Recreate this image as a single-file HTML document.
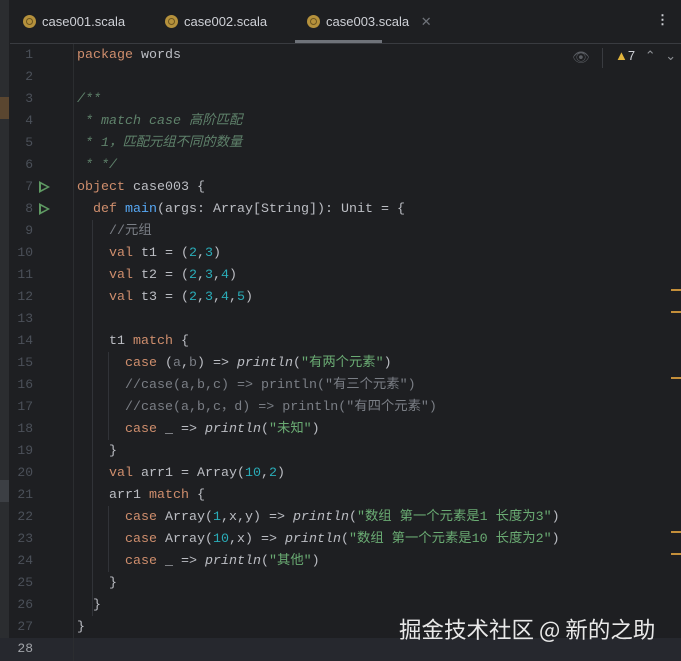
<html><head><style>
body{margin:0;width:681px;height:661px;background:#1e1f22;overflow:hidden;position:relative;font-family:"Liberation Mono","Noto Sans CJK SC",monospace;}
.tabs{position:absolute;left:10px;top:0;right:0;height:43px;border-bottom:1px solid #393b40;font-family:"Liberation Sans",sans-serif;font-size:13px;color:#ced0d6;}
.tab{position:absolute;top:14px;}
.ic{display:inline-block;width:13px;height:13px;border-radius:50%;background:#b5913c;vertical-align:-2px;margin-right:6px;position:relative}
.ic:after{content:"";position:absolute;left:3px;top:3px;width:5px;height:5px;border-radius:50%;border:1px solid #6b5420}
.strip{position:absolute;left:0;top:0;width:9px;height:661px;background:#2b2d30}
.ln{position:absolute;left:10px;width:23px;text-align:right;color:#4b5059;font-size:13px}
.code{position:absolute;left:77px;font-size:13.33px;color:#bcbec4;white-space:pre;line-height:22px}
.k{color:#cf8e6d}.n{color:#2aacb8}.s{color:#6aab73}.c{color:#7a7e85}.d{color:#5f826b;font-style:italic}.i{font-style:italic}.f{color:#56a8f5}
.run{position:absolute;left:39px;width:0;height:0;border-left:11px solid #5f9a63;border-top:6px solid transparent;border-bottom:6px solid transparent}
.run:after{content:"";position:absolute;left:-9px;top:-3px;border-left:6px solid #1e1f22;border-top:3px solid transparent;border-bottom:3px solid transparent}
.mk{position:absolute;left:671px;width:10px;height:2px;background:#c48f3a}
.vl{position:absolute;width:1px;background:#313338}
</style></head><body>
<div class="strip"></div>
<div style="position:absolute;left:0;top:97px;width:9px;height:22px;background:#5a4630"></div>
<div style="position:absolute;left:0;top:480px;width:9px;height:22px;background:#3c3f44"></div>
<div class="tabs">
<div class="tab" style="left:13px"><span class="ic"></span>case001.scala</div>
<div class="tab" style="left:155px"><span class="ic"></span>case002.scala</div>
<div class="tab" style="left:297px"><span class="ic"></span>case003.scala <span style="color:#6f737a;margin-left:8px">✕</span></div>
<div style="position:absolute;left:285px;top:40px;width:87px;height:3px;background:#6f737a"></div>
<div style="position:absolute;right:12px;top:12px;color:#ced0d6;font-weight:bold">⋮</div>
</div>
<div style="position:absolute;left:0;top:638px;width:681px;height:23px;background:#26282e"></div>
<div style="position:absolute;left:73px;top:44px;width:1px;height:617px;background:#2b2d30"></div>
<div style="position:absolute;left:572px;top:50px;color:#5a5d63;font-size:14px;font-family:'DejaVu Sans'">👁</div>
<div style="position:absolute;left:602px;top:48px;width:1px;height:20px;background:#393b40"></div>
<div style="position:absolute;left:615px;top:48px;font-family:'Liberation Sans';font-size:13px;color:#ced0d6"><span style="color:#e0b33c">▲</span>7 <span style="color:#8c8f94;margin-left:6px">⌃</span> <span style="color:#8c8f94;margin-left:6px">⌄</span></div>
<div class="run" style="top:181px"></div><div class="run" style="top:203px"></div>
<div class="vl" style="left:92px;top:220px;height:396px"></div>
<div class="vl" style="left:108px;top:352px;height:88px"></div>
<div class="vl" style="left:108px;top:506px;height:66px"></div>
<div class="mk" style="top:289px"></div><div class="mk" style="top:311px"></div><div class="mk" style="top:377px"></div><div class="mk" style="top:531px"></div><div class="mk" style="top:553px"></div>
<div id="nums"></div>
<div class="code" style="top:45px"><span class="k">package</span> words

<span class="d">/**</span>
<span class="d"> * match case 高阶匹配</span>
<span class="d"> * 1，匹配元组不同的数量</span>
<span class="d"> * */</span>
<span class="k">object</span> case003 {
  <span class="k">def</span> <span class="f">main</span>(args: Array[String]): Unit = {
    <span class="c">//元组</span>
    <span class="k">val</span> t1 = (<span class="n">2</span>,<span class="n">3</span>)
    <span class="k">val</span> t2 = (<span class="n">2</span>,<span class="n">3</span>,<span class="n">4</span>)
    <span class="k">val</span> t3 = (<span class="n">2</span>,<span class="n">3</span>,<span class="n">4</span>,<span class="n">5</span>)

    t1 <span class="k">match</span> {
      <span class="k">case</span> (<span class="c">a</span>,<span class="c">b</span>) => <span class="i">println</span>(<span class="s">"有两个元素"</span>)
      <span class="c">//case(a,b,c) => println("有三个元素")</span>
      <span class="c">//case(a,b,c，d) => println("有四个元素")</span>
      <span class="k">case</span> _ => <span class="i">println</span>(<span class="s">"未知"</span>)
    }
    <span class="k">val</span> arr1 = Array(<span class="n">10</span>,<span class="n">2</span>)
    arr1 <span class="k">match</span> {
      <span class="k">case</span> Array(<span class="n">1</span>,x,y) => <span class="i">println</span>(<span class="s">"数组 第一个元素是1 长度为3"</span>)
      <span class="k">case</span> Array(<span class="n">10</span>,x) => <span class="i">println</span>(<span class="s">"数组 第一个元素是10 长度为2"</span>)
      <span class="k">case</span> _ => <span class="i">println</span>(<span class="s">"其他"</span>)
    }
  }
}
</div>
<div style="position:absolute;left:399px;top:613px;font-family:'Noto Sans CJK SC',sans-serif;font-size:22.5px;color:#e8e8e8;white-space:nowrap">掘金技术社区 @ 新的之助</div>
<script>
var h='';for(var i=1;i<=28;i++){h+='<div class="ln" style="top:'+(47+(i-1)*22)+'px;'+(i==28?'color:#a0a3a8':'')+'">'+i+'</div>';}
document.getElementById('nums').innerHTML=h;
</script>
</body></html>
